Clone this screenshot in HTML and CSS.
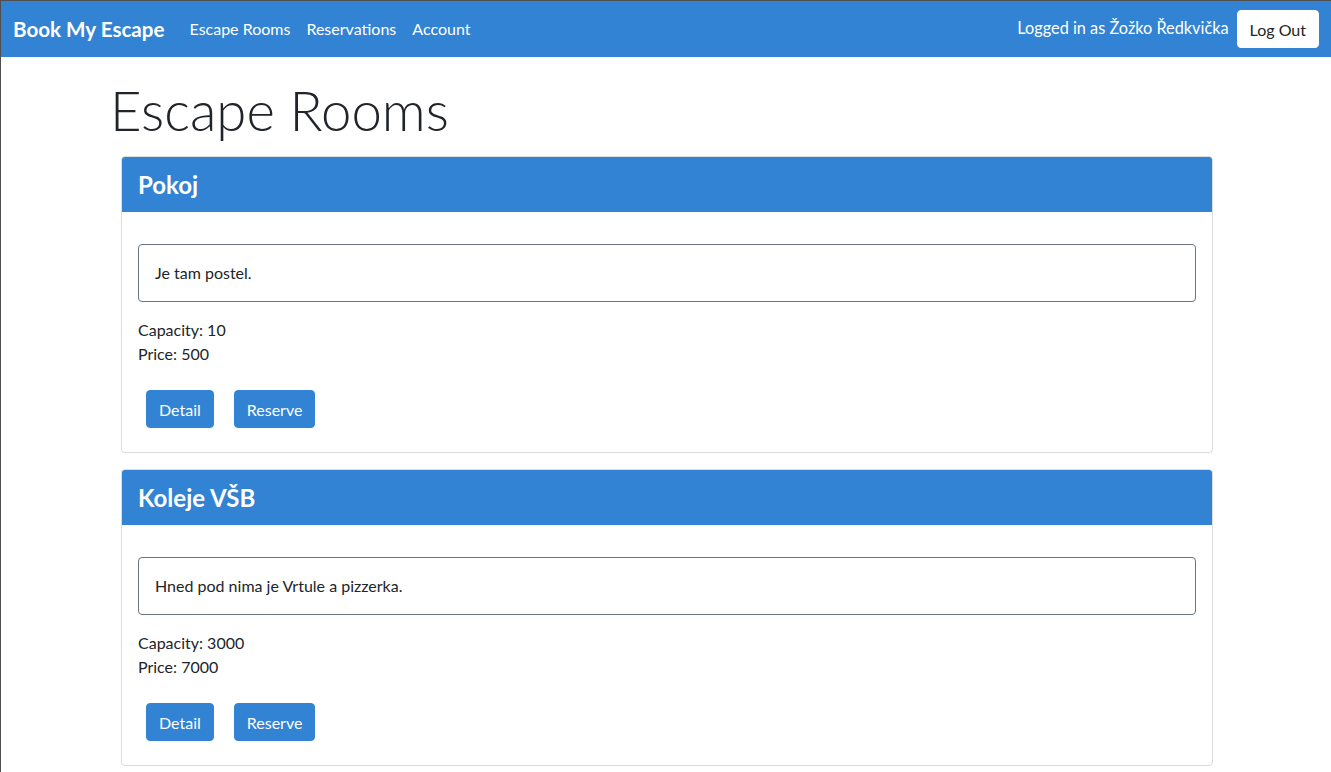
FILE: index.html
```html
<!DOCTYPE html>
<html lang="cs">
<head>
<meta charset="utf-8">
<title>Book My Escape</title>
<link rel="stylesheet" href="styles.css">
</head>
<body>
<div class="frame">
  <nav class="navbar">
    <a class="brand" href="#">Book My Escape</a>
    <ul class="nav-links">
      <li><a href="#">Escape Rooms</a></li>
      <li><a href="#">Reservations</a></li>
      <li><a href="#">Account</a></li>
    </ul>
    <div class="user">
      <span class="logged">Logged in as Žožko Ředkvička</span>
      <button class="btn-logout">Log Out</button>
    </div>
  </nav>
  <main class="container">
    <h1 class="title">Escape Rooms</h1>
    <div class="cards">
      <section class="card">
        <header class="card-header"><h4>Pokoj</h4></header>
        <div class="card-body">
          <div class="desc">Je tam postel.</div>
          <p class="info">Capacity: 10<br>Price: 500</p>
          <div class="actions">
            <button class="btn">Detail</button>
            <button class="btn">Reserve</button>
          </div>
        </div>
      </section>
      <section class="card">
        <header class="card-header"><h4>Koleje VŠB</h4></header>
        <div class="card-body">
          <div class="desc">Hned pod nima je Vrtule a pizzerka.</div>
          <p class="info">Capacity: 3000<br>Price: 7000</p>
          <div class="actions">
            <button class="btn">Detail</button>
            <button class="btn">Reserve</button>
          </div>
        </div>
      </section>
    </div>
  </main>
</div>
</body>
</html>
```
FILE: styles.css
```css
* { box-sizing: border-box; }
html, body { margin: 0; padding: 0; }
body {
  font-family: "Lato", "Noto Sans", sans-serif;
  font-size: 16px;
  line-height: 24px;
  color: #212529;
  background: #fff;
}
.frame {
  min-height: 772px;
  border-left: 1px solid #4f4f4f;
  border-top: 1px solid #4f4f4f;
}
.navbar {
  height: 56px;
  background: #3283d3;
  display: flex;
  align-items: center;
  padding: 0 12px 0 12px;
}
.brand {
  color: #fff;
  text-decoration: none;
  font-weight: 700;
  font-size: 20.6px;
  margin-right: 25px;
}
.nav-links {
  list-style: none;
  margin: 0;
  padding: 0;
  display: flex;
  gap: 16px;
}
.nav-links a {
  color: #fff;
  text-decoration: none;
  font-size: 16px;
}
.user {
  margin-left: auto;
  display: flex;
  align-items: center;
  gap: 8px;
}
.logged { color: #fff; font-size: 16.3px; margin-top: -2px; }
.btn-logout {
  font-family: inherit;
  font-size: 16px;
  background: #fff;
  color: #212529;
  border: 1px solid #fff;
  border-radius: 4px;
  height: 38px;
  padding: 0 12px;
}
.container {
  padding: 0 118px 0 109px;
}
.title {
  font-size: 54.5px;
  font-weight: 300;
  line-height: 1.2;
  margin: 21px 0 13px 0;
}
.cards {
  margin: 0 0 0 11px;
  display: flex;
  flex-direction: column;
  gap: 16px;
}
.card {
  border: 1px solid #dcdcdc;
  border-radius: 4px;
  overflow: hidden;
}
.card-header {
  background: #3283d3;
  height: 55px;
  display: flex;
  align-items: center;
  padding: 0 16px;
}
.card-header h4 {
  margin: 0;
  color: #fff;
  font-size: 24px;
  font-weight: 700;
}
.card-body {
  padding: 32px 16px 24px 16px;
}
.desc {
  border: 1px solid #6c757d;
  border-radius: 4px;
  height: 58px;
  padding: 0 16px;
  display: flex;
  align-items: center;
}
.info { margin: 16px 0 24px 0; }
.actions {
  display: flex;
  gap: 20px;
  padding-left: 8px;
}
.btn {
  font-family: inherit;
  font-size: 16px;
  background: #3283d3;
  color: #fff;
  border: 1px solid #3283d3;
  border-radius: 4px;
  height: 38px;
  padding: 0 12px;
}
```
